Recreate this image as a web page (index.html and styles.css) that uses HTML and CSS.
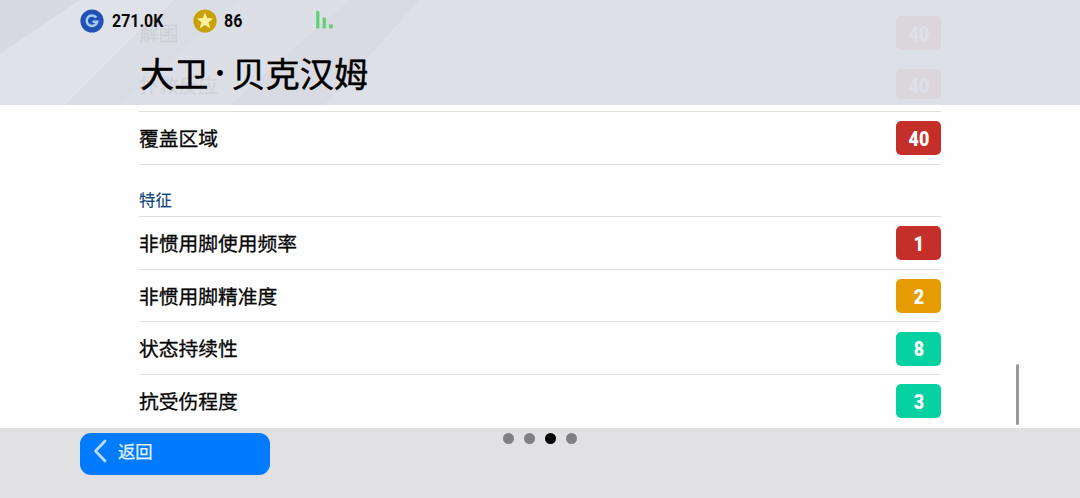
FILE: index.html
```html
<!DOCTYPE html>
<html lang="zh-CN">
<head>
<meta charset="utf-8">
<title>大卫·贝克汉姆</title>
<link rel="stylesheet" href="styles.css">
</head>
<body>
<div class="screen">
  <main class="content">
    <div class="list">
      <div class="row"><span class="label">解围</span><span class="badge red"><b>40</b></span></div>
      <div class="row clipped"><span class="label">扑救反应</span><span class="badge red"><b>40</b></span></div>
      <div class="row"><span class="label">覆盖区域</span><span class="badge red"><b>40</b></span></div>
      <div class="row section"><h2 class="section-title">特征</h2></div>
      <div class="row"><span class="label">非惯用脚使用频率</span><span class="badge red"><b>1</b></span></div>
      <div class="row"><span class="label">非惯用脚精准度</span><span class="badge amber"><b>2</b></span></div>
      <div class="row"><span class="label">状态持续性</span><span class="badge green"><b>8</b></span></div>
      <div class="row"><span class="label">抗受伤程度</span><span class="badge green"><b>3</b></span></div>
    </div>
    <div class="scrollbar"></div>
  </main>
  <header class="header">
    <svg class="backdrop" width="1080" height="105" viewBox="0 0 1080 105">
      <path fill="#dcdee5" d="M0 0H1080V105H0Z"/>
      <path fill="#d6d8e0" d="M0 0H80L0 54Z"/>
      <path fill="#dfe1e8" d="M80 0H175L130 40L65 105H0V54Z"/>
      <path fill="#dadce3" d="M175 0H240L120 105H65L130 40Z"/>
      <path fill="#d8d9e1" d="M350 0H420L325 105H230L300 43Z"/>
      <path fill="#dddfe7" d="M420 0H1080V105H325Z"/>
    </svg>
    <div class="status">
      <svg class="coin" width="24" height="24" viewBox="0 0 24 24">
        <circle cx="12" cy="12" r="11.6" fill="#2253b4"/>
        <path d="M16.3 8.6A5.3 5.3 0 1 0 17.2 12.8H12.6" fill="none" stroke="#a3cdfb" stroke-width="2.5"/>
      </svg>
      <span class="amount gp">271.0K</span>
      <svg class="coin" width="24" height="24" viewBox="0 0 24 24">
        <circle cx="12" cy="12" r="11.6" fill="#c8a008"/>
        <path d="M12 3.4L14.2 9.1L20.2 9.5L15.6 13.3L17.1 19.2L12 15.9L6.9 19.2L8.4 13.3L3.8 9.5L9.8 9.1Z" fill="#fff0a0"/>
      </svg>
      <span class="amount coins">86</span>
      <svg class="signal" width="18" height="18" viewBox="0 0 18 18" fill="#59d470">
        <rect x="0.2" y="0" width="3.2" height="17.5" rx="1"/>
        <rect x="6.6" y="6.5" width="3.2" height="11" rx="1"/>
        <rect x="13" y="13.2" width="3.8" height="4.3" rx="1"/>
      </svg>
    </div>
    <h1 class="name"><span>大卫</span><span class="dot">·</span><span>贝克汉姆</span></h1>
  </header>
  <footer class="footer">
    <button class="back">
      <svg width="14" height="24" viewBox="0 0 14 24"><path d="M12 2L2.5 12L12 22" fill="none" stroke="#b5dcff" stroke-width="2.8" stroke-linecap="round" stroke-linejoin="round"/></svg>
      <span>返回</span>
    </button>
    <div class="pager"><i></i><i></i><i class="active"></i><i></i></div>
    <div class="spacer"></div>
  </footer>
</div>
</body>
</html>
```
FILE: styles.css
```css
* { box-sizing: border-box; }
body { margin: 0; background: #fff; font-family: "Noto Sans CJK SC", sans-serif; color: #050505; }
.screen { position: relative; display: flex; flex-direction: column; width: 1080px; height: 498px; overflow: hidden; }
.content { flex: 1; min-height: 0; overflow: hidden; display: flex; padding: 6.8px 60px 0 139px; background: #fefefe; }
.list { width: 802px; }
.row { display: flex; justify-content: space-between; align-items: center; height: 52.6px; border-bottom: 1.5px solid #dfdfdf; }
.row:last-child { border-bottom-color: transparent; }
.label { font-size: 19.75px; line-height: 28px; -webkit-text-stroke: 0.3px; }
.badge { display: flex; align-items: center; justify-content: center; width: 45px; height: 34px; margin-top: 1px; border-radius: 5px; color: #fff; font: 700 20.5px/34px Roboto, sans-serif; }
.badge b { padding-top: 1px; transform: scaleX(.87); }
.clipped .badge { height: 30px; margin-top: -3px; padding-top: 4px; }
.red { background: #c43029; }
.amber { background: #e59c03; }
.green { background: #05d2a0; }
.section { padding-top: 17px; }
.section-title { margin: 0; font-size: 16.4px; line-height: 24px; font-weight: 400; color: #13467f; -webkit-text-stroke: 0.15px; }
.scrollbar { align-self: flex-end; width: 3px; height: 61px; margin: 0 0 3px 75px; border-radius: 2px; background: #999; }

.header { position: absolute; top: 0; left: 0; width: 1080px; height: 105px; padding-left: 80px; }
.backdrop { position: absolute; top: 0; left: 0; opacity: .945; }
.status { position: relative; display: flex; align-items: center; height: 41px; }
.amount { font: 700 17.5px/24px Roboto, sans-serif; color: #080808; transform: scaleX(.91); transform-origin: left; }
.gp { width: 81px; margin-left: 7.5px; }
.coins { width: 92px; margin-left: 7.5px; }
.signal { margin-top: -1px; }
.name { position: relative; display: flex; margin: 6.5px 0 0 60px; font-size: 34.2px; line-height: 48px; font-weight: 400; color: #000; -webkit-text-stroke: 0.45px; }
.dot { width: 23px; display: flex; justify-content: center; font-size: 27px; -webkit-text-stroke: 0; }

.footer { flex: none; display: grid; grid-template-columns: 190px 1fr 190px; align-items: start; height: 70px; padding: 4.5px 80px 0; background: #e1e1e3; }
.back { display: flex; align-items: center; gap: 11px; width: 190px; height: 42px; padding: 0 0 5px 13px; border: 0; border-radius: 11px; background: #007aff; color: #e6f4ff; font: 400 17.3px/24px "Noto Sans CJK SC", sans-serif; -webkit-text-stroke: 0.25px; }
.back span { margin-top: -1px; }
.pager { display: flex; justify-content: center; gap: 10px; }
.pager i { width: 11px; height: 11px; border-radius: 50%; background: #818185; }
.pager .active { background: #000; }
```
